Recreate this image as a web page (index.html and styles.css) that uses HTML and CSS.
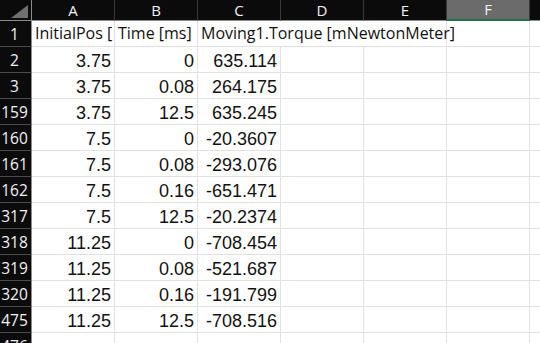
FILE: index.html
```html
<!DOCTYPE html>
<html>
<head>
<meta charset="utf-8">
<link rel="stylesheet" href="styles.css">
</head>
<body>
<div class="sheet">
  <div class="corner"><span class="tri"></span></div>
  <div class="colhead">A</div>
  <div class="colhead">B</div>
  <div class="colhead">C</div>
  <div class="colhead">D</div>
  <div class="colhead">E</div>
  <div class="colhead sel">F</div>
  <div class="colhead rest"></div>

  <div class="rowhead">1</div>
  <div class="cell txt clip">InitialPos [</div>
  <div class="cell txt clip">Time [ms]</div>
  <div class="cell txt wide">Moving1.Torque [mNewtonMeter]</div>
  <div class="cell"></div>
  <div class="cell rest"></div>

  <div class="rowhead">2</div><div class="cell num">3.75</div><div class="cell num">0</div><div class="cell num">635.114</div><div class="cell"></div><div class="cell"></div><div class="cell"></div><div class="cell rest"></div>
  <div class="rowhead">3</div><div class="cell num">3.75</div><div class="cell num">0.08</div><div class="cell num">264.175</div><div class="cell"></div><div class="cell"></div><div class="cell"></div><div class="cell rest"></div>
  <div class="rowhead">159</div><div class="cell num">3.75</div><div class="cell num">12.5</div><div class="cell num">635.245</div><div class="cell"></div><div class="cell"></div><div class="cell"></div><div class="cell rest"></div>
  <div class="rowhead">160</div><div class="cell num">7.5</div><div class="cell num">0</div><div class="cell num">-20.3607</div><div class="cell"></div><div class="cell"></div><div class="cell"></div><div class="cell rest"></div>
  <div class="rowhead">161</div><div class="cell num">7.5</div><div class="cell num">0.08</div><div class="cell num">-293.076</div><div class="cell"></div><div class="cell"></div><div class="cell"></div><div class="cell rest"></div>
  <div class="rowhead">162</div><div class="cell num">7.5</div><div class="cell num">0.16</div><div class="cell num">-651.471</div><div class="cell"></div><div class="cell"></div><div class="cell"></div><div class="cell rest"></div>
  <div class="rowhead">317</div><div class="cell num">7.5</div><div class="cell num">12.5</div><div class="cell num">-20.2374</div><div class="cell"></div><div class="cell"></div><div class="cell"></div><div class="cell rest"></div>
  <div class="rowhead">318</div><div class="cell num">11.25</div><div class="cell num">0</div><div class="cell num">-708.454</div><div class="cell"></div><div class="cell"></div><div class="cell"></div><div class="cell rest"></div>
  <div class="rowhead">319</div><div class="cell num">11.25</div><div class="cell num">0.08</div><div class="cell num">-521.687</div><div class="cell"></div><div class="cell"></div><div class="cell"></div><div class="cell rest"></div>
  <div class="rowhead">320</div><div class="cell num">11.25</div><div class="cell num">0.16</div><div class="cell num">-191.799</div><div class="cell"></div><div class="cell"></div><div class="cell"></div><div class="cell rest"></div>
  <div class="rowhead">475</div><div class="cell num">11.25</div><div class="cell num">12.5</div><div class="cell num">-708.516</div><div class="cell"></div><div class="cell"></div><div class="cell"></div><div class="cell rest"></div>
  <div class="rowhead">476</div><div class="cell"></div><div class="cell"></div><div class="cell"></div><div class="cell"></div><div class="cell"></div><div class="cell"></div><div class="cell rest"></div>
</div>
</body>
</html>
```
FILE: styles.css
```css
* { box-sizing: border-box; }
html, body { margin: 0; padding: 0; background: #ffffff; overflow: hidden; }
body { width: 540px; height: 343px; }

.sheet {
  display: grid;
  grid-template-columns: 32px repeat(6, 83px) 1fr;
  grid-template-rows: 21px repeat(13, 26px);
  width: 540px;
  height: 343px;
  overflow: hidden;
}

.corner {
  background: #0b0b0b;
  border-right: 1px solid #8c8c8c;
  border-bottom: 1px solid #8c8c8c;
  position: relative;
}
.tri {
  position: absolute;
  left: 11px;
  top: 5px;
  width: 0;
  height: 0;
  border-left: 17px solid transparent;
  border-bottom: 13px solid #6f6f6f;
}

.colhead {
  background: #0b0b0b;
  color: #f2f2f2;
  font-family: "Open Sans", "Noto Sans", sans-serif;
  font-size: 15px;
  line-height: 20px;
  text-align: center;
  border-right: 1px solid #3a3a3a;
  border-bottom: 1px solid #8c8c8c;
}
.colhead.sel {
  background: #6b6b6b;
  border-bottom: 2px solid #217346;
  line-height: 19px;
}
.colhead.rest { border-right: none; }

.rowhead {
  background: #0b0b0b;
  color: #f2f2f2;
  font-family: "Open Sans", "Noto Sans", sans-serif;
  font-size: 15.5px;
  line-height: 26px;
  text-align: center;
  padding-right: 2px;
  border-right: 1px solid #8c8c8c;
  border-bottom: 1px solid #4a4a4a;
}

.cell {
  border-right: 1px solid #e1e1e1;
  border-bottom: 1px solid #e1e1e1;
  color: #111111;
  white-space: nowrap;
  line-height: 26px;
  padding-top: 1px;
  overflow: hidden;
}
.cell.rest { border-right: none; }

.num {
  font-family: "Liberation Sans", Arial, sans-serif;
  font-size: 18px;
  text-align: right;
  padding-right: 3px;
}

.txt {
  font-family: "Open Sans", "Noto Sans", sans-serif;
  font-size: 16px;
  padding-left: 3px;
  line-height: 25px;
  padding-top: 0;
}
.txt.clip { overflow: hidden; }
.txt.wide {
  grid-column: span 3;
  overflow: visible;
  position: relative;
  z-index: 1;
}
```
